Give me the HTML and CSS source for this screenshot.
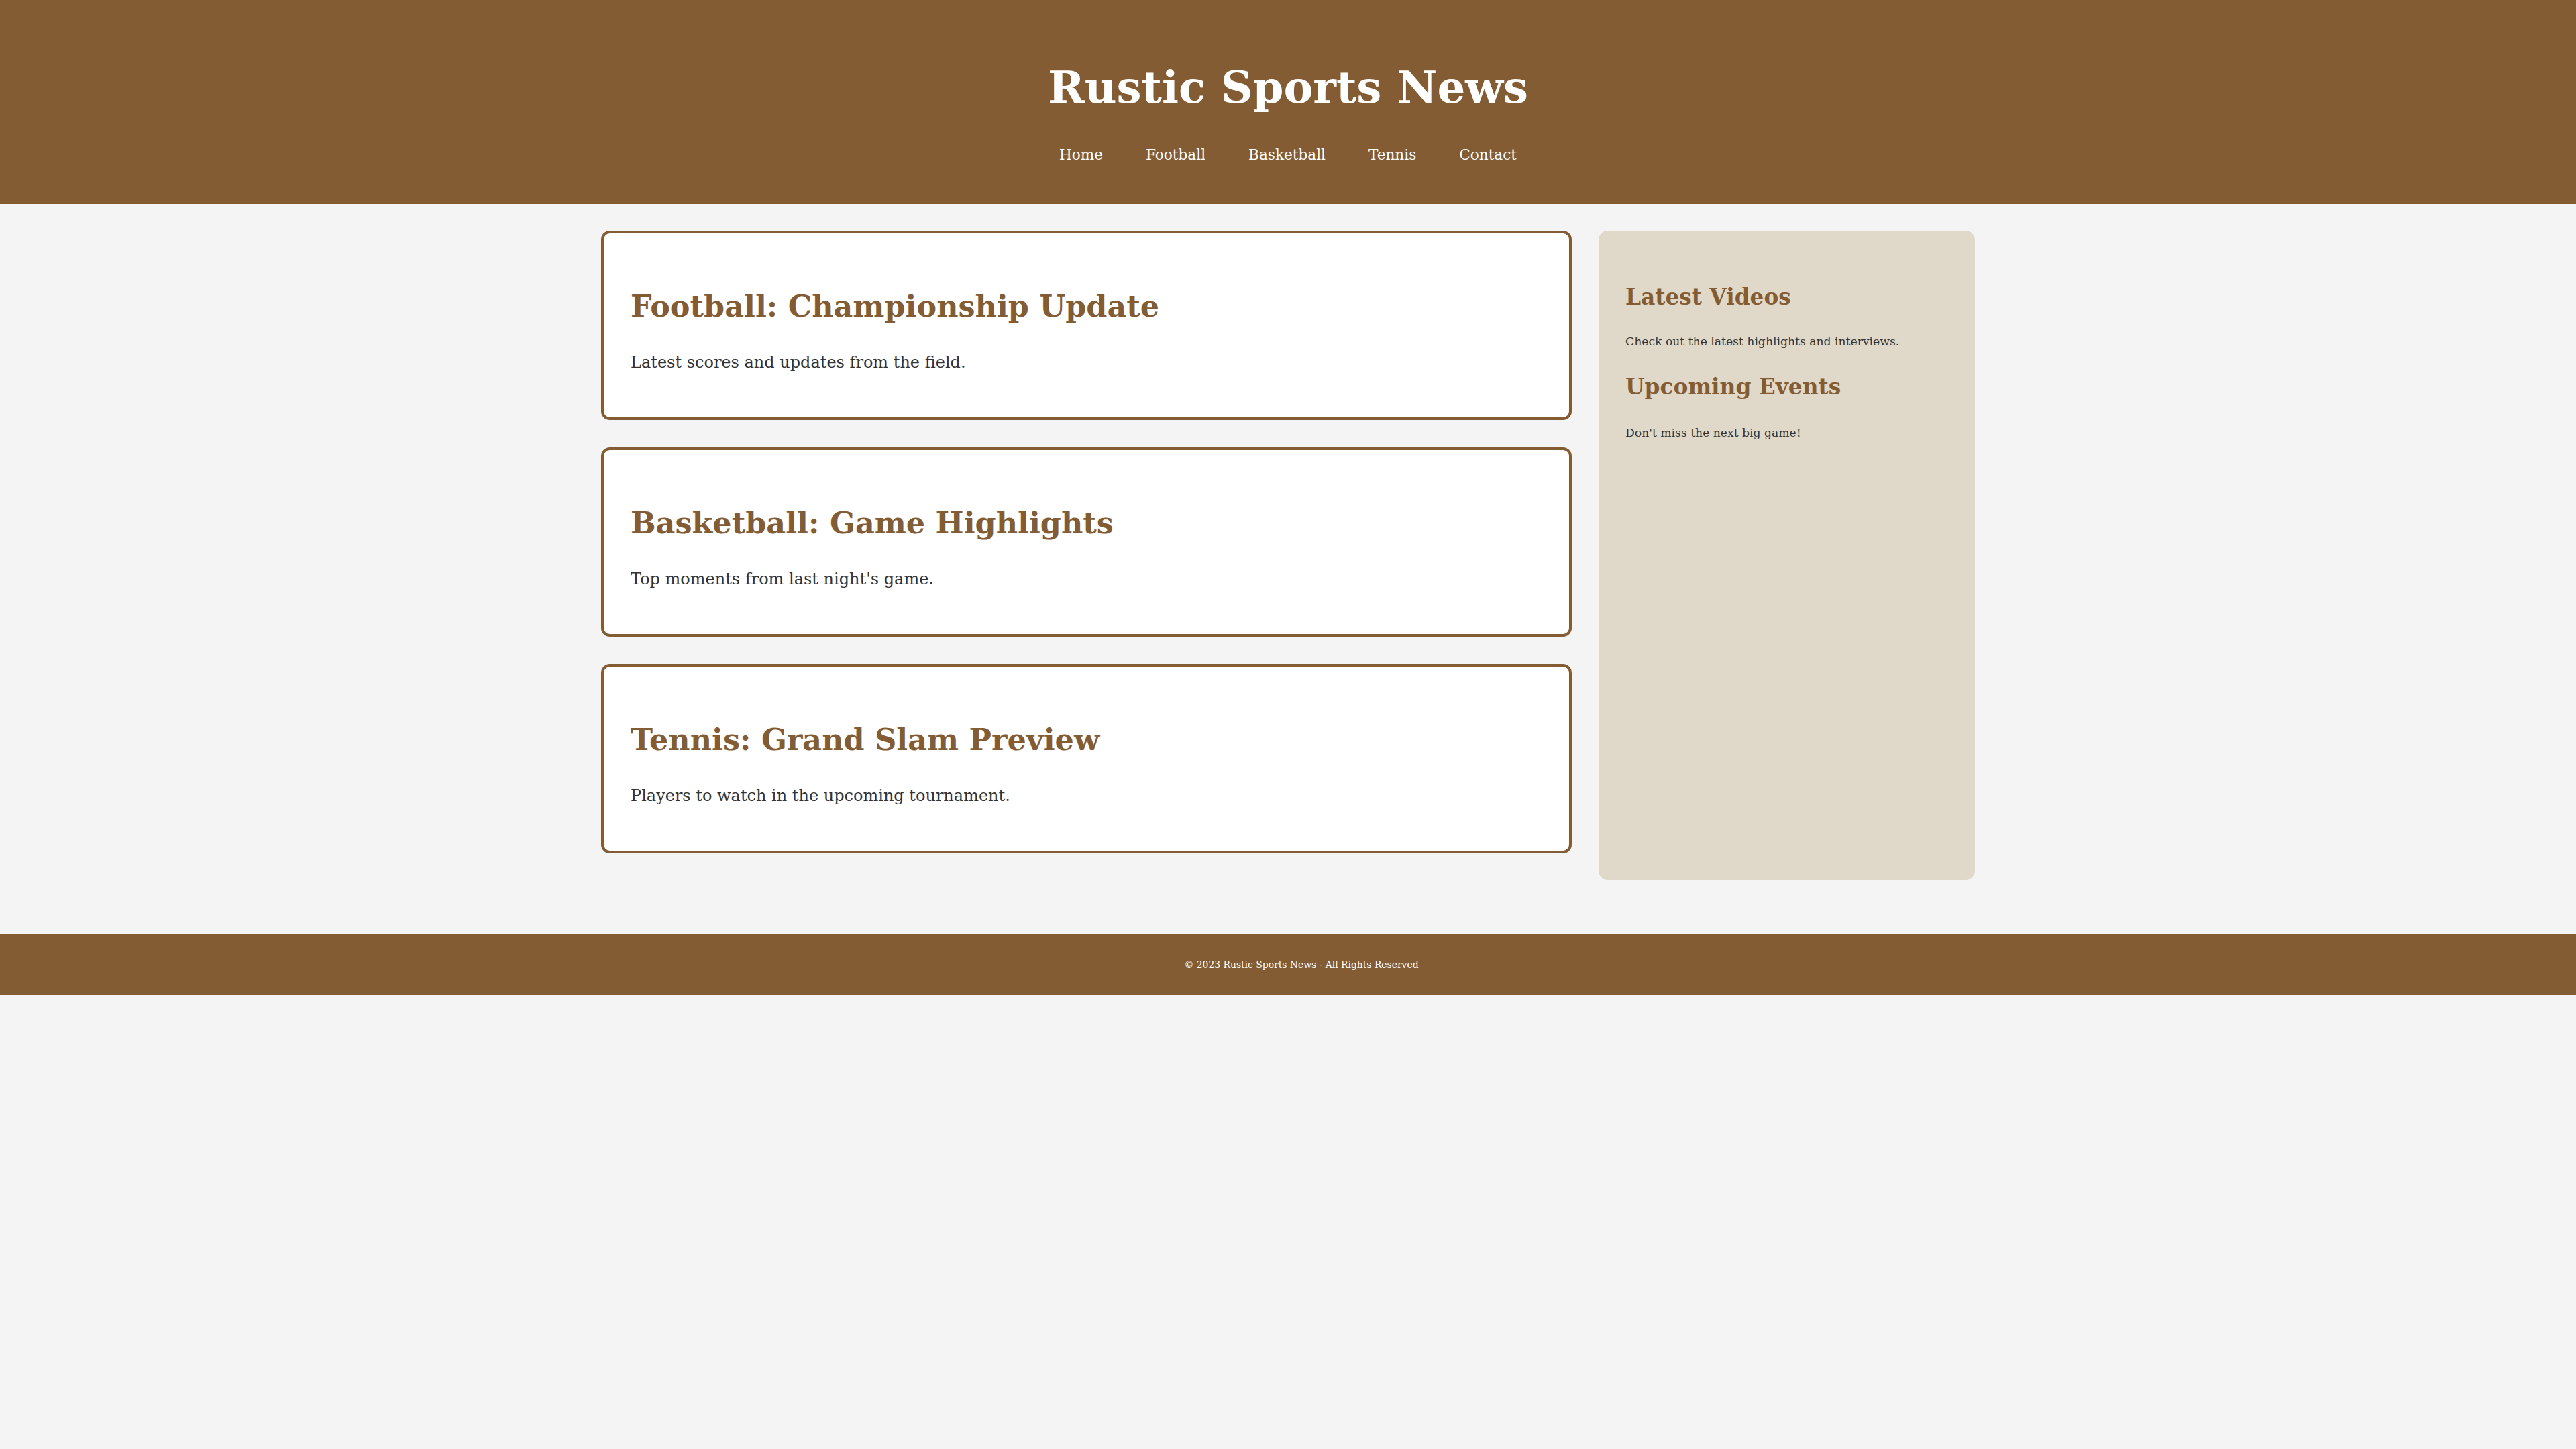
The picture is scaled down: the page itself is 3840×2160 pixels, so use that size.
FILE: index.html
```html
<!DOCTYPE html>
<html lang="en">
<head>
<meta charset="utf-8">
<title>Rustic Sports News</title>
<link rel="stylesheet" href="styles.css">
</head>
<body>
<header class="site-header">
  <h1 class="site-title">Rustic Sports News</h1>
  <nav class="site-nav">
    <a href="#">Home</a>
    <a href="#">Football</a>
    <a href="#">Basketball</a>
    <a href="#">Tennis</a>
    <a href="#">Contact</a>
  </nav>
</header>
<div class="container">
  <main class="articles">
    <article class="card">
      <h2 class="card-title">Football: Championship Update</h2>
      <p class="card-text">Latest scores and updates from the field.</p>
    </article>
    <article class="card">
      <h2 class="card-title">Basketball: Game Highlights</h2>
      <p class="card-text">Top moments from last night's game.</p>
    </article>
    <article class="card">
      <h2 class="card-title">Tennis: Grand Slam Preview</h2>
      <p class="card-text">Players to watch in the upcoming tournament.</p>
    </article>
  </main>
  <aside class="sidebar">
    <h3 class="side-title">Latest Videos</h3>
    <p class="side-text">Check out the latest highlights and interviews.</p>
    <h3 class="side-title">Upcoming Events</h3>
    <p class="side-text">Don't miss the next big game!</p>
  </aside>
</div>
<footer class="site-footer">
  <p class="footer-text">© 2023 Rustic Sports News - All Rights Reserved</p>
</footer>
</body>
</html>
```
FILE: styles.css
```css
* { box-sizing: border-box; }
html, body { margin: 0; padding: 0; }
body {
  background: #f4f4f4;
  color: #333;
  font-family: "DejaVu Serif", "Liberation Serif", serif;
}
.site-header {
  background: #845c33;
  color: #fff;
  text-align: center;
  padding: 92px 0 60.4px;
}
.site-title {
  margin: 0;
  font-size: 65.8px;
  line-height: 76.8px;
  font-weight: bold;
}
.site-nav {
  margin-top: 49.3px;
  display: flex;
  justify-content: center;
  gap: 64px;
  font-size: 21.6px;
  line-height: 26px;
}
.site-nav a {
  color: #fff;
  text-decoration: none;
}
.container {
  width: 2048px;
  margin: 0 auto;
  padding: 40px 0 80px;
  display: flex;
  gap: 40px;
  align-items: stretch;
}
.articles {
  flex: 1;
  min-width: 0;
}
.card {
  background: #fff;
  border: 4px solid #845c33;
  border-radius: 13px;
  padding: 40px;
  margin-bottom: 40.67px;
  height: 282px;
}
.card-title {
  margin: 43px 0 0;
  color: #845c33;
  font-size: 44.5px;
  line-height: 51.2px;
  font-weight: bold;
}
.card-text {
  margin: 39.5px 0 0;
  font-size: 24px;
  line-height: 37.5px;
}
.sidebar {
  width: 561px;
  flex: none;
  background: #e0d8c8;
  border-radius: 14px;
  padding: 0 40px 40px;
}
.side-title {
  margin: 0;
  color: #845c33;
  font-size: 32.8px;
  line-height: 40.8px;
  font-weight: bold;
}
.side-title:first-child { margin-top: 78.2px; }
.side-text {
  margin: 32.8px 0 34px;
  font-size: 17.2px;
  line-height: 26.7px;
}
.side-text:last-child { margin-bottom: 0; margin-top: 34px; }
.site-footer {
  background: #845c33;
  color: #fff;
  text-align: center;
  padding: 34.5px 0 34px 40px;
}
.footer-text {
  margin: 0;
  font-size: 13.9px;
  line-height: 22.5px;
}
```
